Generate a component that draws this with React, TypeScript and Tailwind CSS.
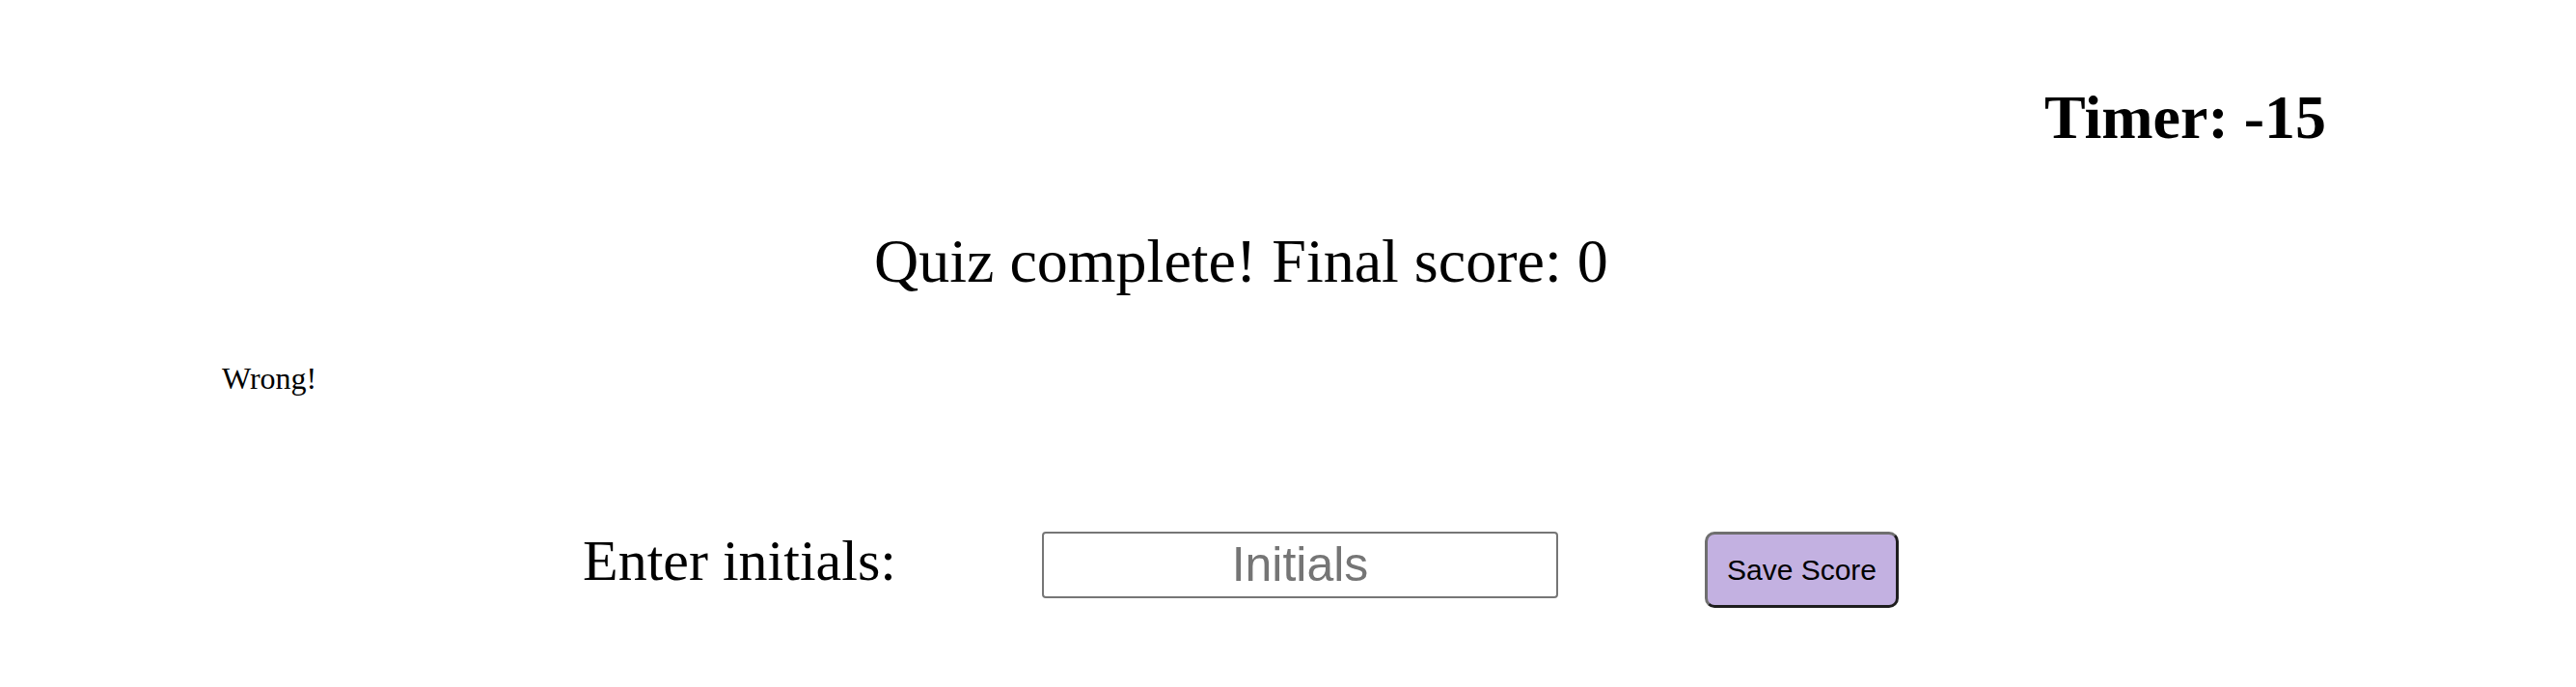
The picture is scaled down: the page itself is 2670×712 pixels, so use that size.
import React, { useState } from 'react';

const serif = { fontFamily: '"Liberation Serif", "Times New Roman", serif' };

const App = () => {
  const [initials, setInitials] = useState('');

  return (
    <div className="w-full h-[712px] bg-white text-black" style={serif}>
      <div className="flex justify-end pt-[90px] pr-[259px]">
        <h1 className="text-[64px] leading-none font-bold">Timer: -15</h1>
      </div>

      <h2 className="mt-[85px] pl-[906px] text-[64px] leading-none font-normal whitespace-nowrap">
        Quiz complete! Final score: 0
      </h2>

      <p className="mt-[73px] pl-[230px] text-[32px] leading-none">Wrong!</p>

      <div className="mt-[143px] flex items-start pl-[604px]">
        <label className="w-[476px] text-[60px] leading-none whitespace-nowrap">Enter initials:</label>
        <input
          type="text"
          value={initials}
          onChange={(e) => setInitials(e.target.value)}
          placeholder="Initials"
          className="w-[535px] h-[69px] border-2 border-[#767676] rounded-[4px] text-center text-[50px] font-['Liberation_Sans',Arial,sans-serif] placeholder:text-[#757575] outline-none"
        />
        <button className="ml-[152px] w-[201px] h-[79px] rounded-[10px] border-[3px] border-t-[#6f6f6f] border-l-[#6f6f6f] border-b-[#1e1e1e] border-r-[#1e1e1e] bg-[#c3b1e1] text-[30px] text-black font-['Liberation_Sans',Arial,sans-serif]">
          Save Score
        </button>
      </div>
    </div>
  );
};

export default App;
